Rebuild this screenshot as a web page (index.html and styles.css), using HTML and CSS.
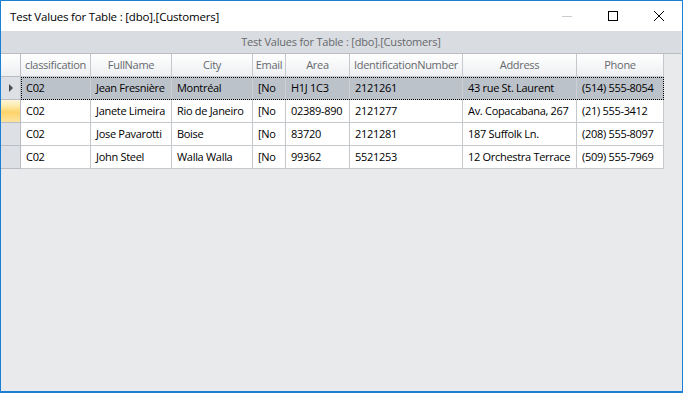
FILE: index.html
```html
<!DOCTYPE html>
<html>
<head>
<meta charset="utf-8">
<link rel="stylesheet" href="styles.css">
</head>
<body>
<div class="window">
  <div class="titlebar">
    <div class="title">Test Values for Table : [dbo].[Customers]</div>
    <div class="controls">
      <div class="ctl"><svg width="10" height="10" viewBox="0 0 10 10"><line x1="0" y1="5.5" x2="10" y2="5.5" stroke="#cccccc" stroke-width="1"/></svg></div>
      <div class="ctl"><svg width="10" height="10" viewBox="0 0 10 10"><rect x="0.5" y="0.5" width="9" height="9" fill="none" stroke="#000" stroke-width="1"/></svg></div>
      <div class="ctl"><svg width="10" height="10" viewBox="0 0 10 10"><path d="M0 0L10 10M10 0L0 10" stroke="#000" stroke-width="1"/></svg></div>
    </div>
  </div>
  <div class="content">
    <div class="grid">
      <div class="caption">Test Values for Table : [dbo].[Customers]</div>
      <div class="row head">
        <div class="rh"></div>
        <div class="cells">
          <div class="c c1">classification</div>
          <div class="c c2">FullName</div>
          <div class="c c3">City</div>
          <div class="c c4">Email</div>
          <div class="c c5">Area</div>
          <div class="c c6">IdentificationNumber</div>
          <div class="c c7">Address</div>
          <div class="c c8">Phone</div>
        </div>
      </div>
      <div class="row sel">
        <div class="rh"><span class="arrow"></span></div>
        <div class="cells">
          <div class="c c1">C02</div>
          <div class="c c2">Jean Fresnière</div>
          <div class="c c3">Montréal</div>
          <div class="c c4">[No</div>
          <div class="c c5">H1J 1C3</div>
          <div class="c c6">2121261</div>
          <div class="c c7">43 rue St. Laurent</div>
          <div class="c c8">(514) 555-8054</div>
        </div>
      </div>
      <div class="row">
        <div class="rh hot"></div>
        <div class="cells">
          <div class="c c1">C02</div>
          <div class="c c2">Janete Limeira</div>
          <div class="c c3">Rio de Janeiro</div>
          <div class="c c4">[No</div>
          <div class="c c5">02389-890</div>
          <div class="c c6">2121277</div>
          <div class="c c7">Av. Copacabana, 267</div>
          <div class="c c8">(21) 555-3412</div>
        </div>
      </div>
      <div class="row">
        <div class="rh"></div>
        <div class="cells">
          <div class="c c1">C02</div>
          <div class="c c2">Jose Pavarotti</div>
          <div class="c c3">Boise</div>
          <div class="c c4">[No</div>
          <div class="c c5">83720</div>
          <div class="c c6">2121281</div>
          <div class="c c7">187 Suffolk Ln.</div>
          <div class="c c8">(208) 555-8097</div>
        </div>
      </div>
      <div class="row">
        <div class="rh"></div>
        <div class="cells">
          <div class="c c1">C02</div>
          <div class="c c2">John Steel</div>
          <div class="c c3">Walla Walla</div>
          <div class="c c4">[No</div>
          <div class="c c5">99362</div>
          <div class="c c6">5521253</div>
          <div class="c c7">12 Orchestra Terrace</div>
          <div class="c c8">(509) 555-7969</div>
        </div>
      </div>
    </div>
  </div>
</div>
</body>
</html>
```
FILE: styles.css
```css
html, body {
  margin: 0;
  padding: 0;
}
body {
  width: 683px;
  height: 393px;
  overflow: hidden;
  font-family: "Open Sans", "Noto Sans", sans-serif;
  font-size: 11px;
  letter-spacing: -0.3px;
  color: #000;
}
.window {
  box-sizing: border-box;
  width: 683px;
  height: 393px;
  border: 1px solid #1a80d6;
  border-bottom-width: 2px;
  display: flex;
  flex-direction: column;
  background: #e9eaec;
}
.titlebar {
  height: 30px;
  background: #fff;
  display: flex;
  align-items: center;
  justify-content: space-between;
  flex: none;
}
.title {
  padding-left: 9px;
  font-size: 11.5px;
  color: #000;
  letter-spacing: -0.2px;
}
.controls {
  display: flex;
  height: 30px;
}
.ctl {
  width: 46px;
  height: 30px;
  display: flex;
  align-items: center;
  justify-content: center;
}
.ctl svg {
  display: block;
}
.content {
  flex: 1;
  background: #e9eaec;
}
.grid {
  width: 663px;
}
.caption {
  width: 680px;
  height: 23px;
  box-sizing: border-box;
  background: #d9dce0;
  border-bottom: 1px solid #b9bcc1;
  color: #66696d;
  text-align: center;
  line-height: 22px;
  font-size: 11px;
  letter-spacing: -0.2px;
}
.row {
  display: flex;
  height: 23px;
}
.rh {
  width: 20px;
  flex: none;
  box-sizing: border-box;
  background: #dde0e4;
  border-right: 1px solid #b9bdc3;
  border-bottom: 1px solid #b9bdc3;
  position: relative;
}
.rh.hot {
  background: linear-gradient(#fff6da 0%, #fde9a6 30%, #fdd36a 55%, #fde4a0 100%);
}
.arrow {
  position: absolute;
  left: 8px;
  top: 7px;
  width: 0;
  height: 0;
  border-top: 4px solid transparent;
  border-bottom: 4px solid transparent;
  border-left: 4px solid #4a4a4a;
}
.cells {
  display: flex;
  flex: 1;
  background: #fff;
}
.c {
  box-sizing: border-box;
  height: 23px;
  border-right: 1px solid #c5c8cd;
  border-bottom: 1px solid #c5c8cd;
  padding: 0 0 0 5px;
  line-height: 22px;
  white-space: nowrap;
  overflow: hidden;
}
.c1 { width: 70px; }
.c2 { width: 81px; }
.c3 { width: 81px; }
.c4 { width: 33px; }
.c5 { width: 64px; }
.c6 { width: 113px; }
.c7 { width: 114px; }
.c8 { width: 87px; }
.head .cells {
  background: linear-gradient(#ffffff, #f6f7f8 50%, #eceef1);
}
.head .c {
  color: #66696d;
  text-align: center;
  padding: 0;
}
.head .rh {
  background: linear-gradient(#ffffff, #f6f7f8 50%, #eceef1);
}
.sel .cells {
  background: #bcc2ca;
  outline: 1px dotted #000;
  outline-offset: -1px;
}
.sel .c {
  border-right-color: #cdd1d6;
}
```
